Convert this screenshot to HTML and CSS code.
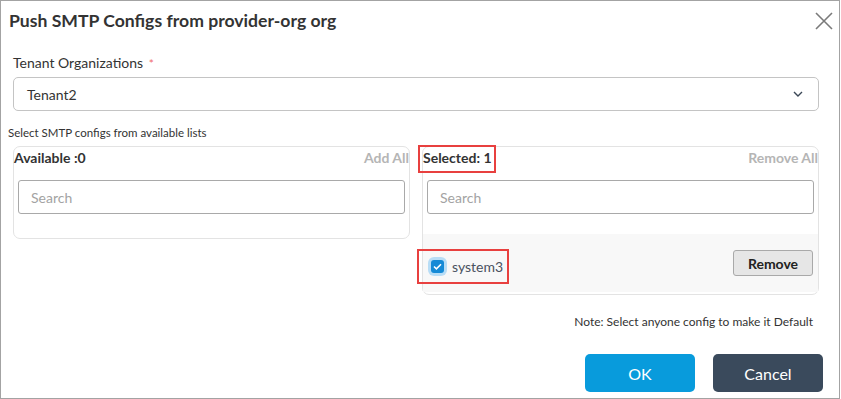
FILE: index.html
```html
<!DOCTYPE html>
<html lang="en">
<head>
    <meta charset="utf-8">
    <title>Push SMTP Configs</title>
    <link rel="stylesheet" href="styles.css">
</head>
<body>
    <div class="dialog">
        <div class="dialog-header">
            <h2 class="dialog-title">Push SMTP Configs from provider-org org</h2>
            <button class="close-btn" type="button" aria-label="Close">
                <svg width="18" height="18" viewBox="0 0 18 18"><path d="M1 1 L17 17 M17 1 L1 17" stroke="#7a7a7a" stroke-width="1.6" fill="none"/></svg>
            </button>
        </div>

        <div class="dialog-body">
            <label class="field-label">Tenant Organizations <span class="req">*</span></label>
            <div class="select-box">
                <span>Tenant2</span>
                <svg width="10" height="6" viewBox="0 0 10 6"><path d="M1 1 L5 5 L9 1" stroke="#3b4756" stroke-width="1.4" fill="none"/></svg>
            </div>

            <div class="hint">Select SMTP configs from available lists</div>

            <div class="lists">
                <div class="list-panel">
                    <div class="list-head">
                        <span class="list-count">Available :0</span>
                        <span class="list-action">Add All</span>
                    </div>
                    <input class="search" type="text" placeholder="Search">
                    <div class="list-items empty"></div>
                </div>

                <div class="list-panel">
                    <div class="list-head">
                        <span class="list-count marked marked-count">Selected: 1</span>
                        <span class="list-action">Remove All</span>
                    </div>
                    <input class="search" type="text" placeholder="Search">
                    <div class="list-items">
                        <div class="list-item">
                            <span class="item-label marked marked-item">
                                <span class="check">
                                    <svg width="9" height="7" viewBox="0 0 9 7"><path d="M1 3.5 L3.4 5.8 L8 1.2" stroke="#fff" stroke-width="1.6" fill="none"/></svg>
                                </span>
                                <span class="item-name">system3</span>
                            </span>
                            <button class="remove-btn" type="button">Remove</button>
                        </div>
                    </div>
                </div>
            </div>

            <div class="note">Note: Select anyone config to make it Default</div>
        </div>

        <div class="dialog-footer">
            <button class="btn btn-primary" type="button">OK</button>
            <button class="btn btn-dark" type="button">Cancel</button>
        </div>
    </div>
</body>
</html>
```

FILE: styles.css
```css
* {
    box-sizing: border-box;
}

body {
    margin: 0;
    font-family: Lato, "Open Sans", Arial, sans-serif;
    color: #333;
    background: #fff;
}

.dialog {
    width: 840px;
    height: 399px;
    border: 1px solid #a3a3a3;
    background: #fff;
}

.dialog-header {
    display: flex;
    justify-content: space-between;
    align-items: center;
    padding: 8px 6px 0 8px;
}

.dialog-title {
    margin: 0;
    font-size: 17.6px;
    line-height: 24px;
    font-weight: bold;
    color: #333;
}

.close-btn {
    border: 0;
    background: none;
    padding: 0;
    width: 18px;
    height: 18px;
    cursor: pointer;
}

.dialog-body {
    padding: 20px 20px 0 12px;
}

.field-label {
    display: block;
    font-size: 14px;
    line-height: 20px;
    color: #333;
}

.req {
    color: #f06a6a;
    font-size: 12px;
    margin-left: 2px;
}

.select-box {
    display: flex;
    justify-content: space-between;
    align-items: center;
    height: 34px;
    margin-top: 3px;
    padding: 0 15px 0 13px;
    border: 1px solid #c4c4c4;
    border-radius: 5px;
    font-size: 14px;
    color: #333;
}

.hint {
    margin: 14px 0 0 -5px;
    font-size: 11.5px;
    line-height: 16px;
    color: #333;
}

.lists {
    display: grid;
    grid-template-columns: 1fr 1fr;
    gap: 12px;
    align-items: start;
    margin-top: 5px;
}

.list-panel {
    border: 1px solid #e3e3e3;
    border-radius: 7px;
}

.list-head {
    display: flex;
    justify-content: space-between;
    height: 21px;
    padding-top: 1px;
    font-size: 14px;
    line-height: 20px;
    font-weight: bold;
}

.list-count {
    color: #333;
}

.list-action {
    color: #b5b5b5;
}

.search {
    display: block;
    width: calc(100% - 8px);
    height: 34px;
    margin: 12px 4px 0;
    padding: 0 12px;
    border: 1px solid #a9a9a9;
    border-radius: 3px;
    font-family: Lato, "Open Sans", Arial, sans-serif;
    font-size: 14px;
    color: #333;
}

.search::placeholder {
    color: #a3a3a3;
}

.list-items {
    margin-top: 20px;
    padding-bottom: 2px;
}

.list-items.empty {
    height: 24px;
    margin-top: 0;
    padding: 0;
}

.list-item {
    display: flex;
    justify-content: space-between;
    align-items: center;
    height: 58px;
    padding: 0 5px 0 8px;
    background: #f8f8f8;
}

.item-label {
    display: flex;
    align-items: center;
    gap: 8px;
    margin-top: 6px;
}

.check {
    display: flex;
    justify-content: center;
    align-items: center;
    width: 13px;
    height: 13px;
    border-radius: 3px;
    background: #158ad6;
    box-shadow: 0 0 0 3px #b8ddf6;
}

.item-name {
    font-size: 14px;
    color: #4a5260;
}

.remove-btn {
    width: 80px;
    height: 26px;
    padding: 0;
    border: 1px solid #a9a9a9;
    border-radius: 3px;
    background: #e6e6e6;
    font-family: Lato, "Open Sans", Arial, sans-serif;
    font-size: 14px;
    font-weight: bold;
    color: #222;
}

/* red annotation boxes */
.marked {
    position: relative;
}

.marked::after {
    content: "";
    position: absolute;
    border: 2px solid #e8403f;
}

.marked-count::after {
    top: -3px;
    right: -4px;
    bottom: -5px;
    left: -5px;
}

.marked-item::after {
    top: -9px;
    right: -6px;
    bottom: -9px;
    left: -14px;
}

.note {
    margin-top: 19px;
    padding-right: 6px;
    text-align: right;
    font-size: 12px;
    line-height: 16px;
    color: #333;
}

.dialog-footer {
    display: flex;
    justify-content: flex-end;
    gap: 18px;
    padding: 24px 16px 0 0;
}

.btn {
    width: 110px;
    height: 38px;
    border: 0;
    border-radius: 5px;
    font-family: Lato, "Open Sans", Arial, sans-serif;
    font-size: 16px;
    color: #fff;
    cursor: pointer;
}

.btn-primary {
    background: #089bdc;
}

.btn-dark {
    background: #3a4a5c;
}
```
